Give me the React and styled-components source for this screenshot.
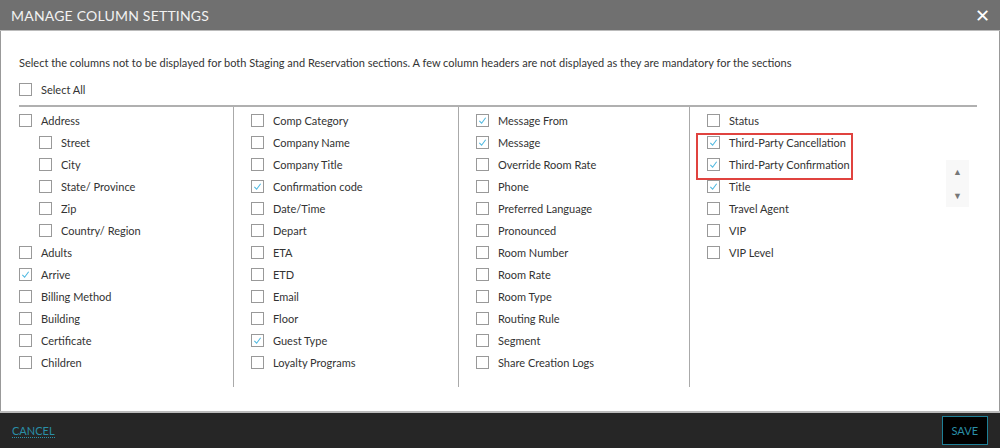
import React from "react";
import styled, { createGlobalStyle } from "styled-components";

const G = createGlobalStyle`
  body { margin:0; font-family: Lato, "Liberation Sans", sans-serif; }
`;
const Modal = styled.div`width:1000px;height:448px;display:flex;flex-direction:column;background:#fff;overflow:hidden;`;
const Header = styled.div`height:30px;background:#707070;display:flex;align-items:center;justify-content:space-between;padding:0 10px 0 11px;color:#f2f2f2;font-size:14px;letter-spacing:0.2px;border-bottom:1px solid #bbb;`;
const Close = styled.span`font-size:18px;color:#fff;line-height:1;`;
const Body = styled.div`flex:1;padding:21px 22px 0 18px;border-left:1px solid #999;border-right:1px solid #999;position:relative;`;
const Intro = styled.div`font-size:11px;color:#333;margin-top:4px;`;
const SelectAll = styled.div`margin-top:9px;padding-bottom:5px;border-bottom:2px solid #b0b0b0;`;
const Grid = styled.div`display:grid;grid-template-columns:215px 225px 231px 1fr;`;
const Col = styled.div`padding:2px 0 10px ${p=>p.$first?0:17}px;${p=>p.$last?"":"border-right:1px solid #aaa;"}height:268px;`;
const Row = styled.div`display:flex;align-items:center;height:22px;padding-left:${p=>p.$indent?20:0}px;font-size:11px;color:#333;gap:9px;`;
const Box = styled.span`width:11px;height:11px;border:1px solid #999;background:#fff;display:inline-flex;align-items:center;justify-content:center;flex-shrink:0;`;
const Highlight = styled.div`position:absolute;left:695px;top:102px;width:157px;height:47px;border:2px solid #e0433f;box-sizing:border-box;`;
const Scroll = styled.div`position:absolute;left:945px;top:129px;width:23px;height:47px;background:#f8f8f8;display:flex;flex-direction:column;align-items:center;justify-content:space-around;color:#777;font-size:9px;`;
const Footer = styled.div`height:35px;background:#262626;display:flex;align-items:center;justify-content:space-between;padding:0 12px 0 12px;border-top:2px solid #bbb;`;
const Cancel = styled.span`color:#2a8fa8;font-size:11px;border-bottom:1px dotted #2a8fa8;`;
const Save = styled.span`color:#2a8fa8;font-size:11px;background:#000;border:1px solid #1e7f96;padding:7px 9px;`;

const Check = ({c}) => <Box>{c ? <svg width="9" height="9" viewBox="0 0 10 10"><path d="M1.5 5.5 L4 8 L8.5 2" fill="none" stroke="#4fb8e0" strokeWidth="1.2"/></svg> : null}</Box>;

const cols = [
  [["Address"],["Street",0,1],["City",0,1],["State/ Province",0,1],["Zip",0,1],["Country/ Region",0,1],["Adults"],["Arrive",1],["Billing Method"],["Building"],["Certificate"],["Children"]],
  [["Comp Category"],["Company Name"],["Company Title"],["Confirmation code",1],["Date/Time"],["Depart"],["ETA"],["ETD"],["Email"],["Floor"],["Guest Type",1],["Loyalty Programs"]],
  [["Message From",1],["Message",1],["Override Room Rate"],["Phone"],["Preferred Language"],["Pronounced"],["Room Number"],["Room Rate"],["Room Type"],["Routing Rule"],["Segment"],["Share Creation Logs"]],
  [["Status"],["Third-Party Cancellation",1],["Third-Party Confirmation",1],["Title",1],["Travel Agent"],["VIP"],["VIP Level"]],
];

export default function App(){
  return <><G/><Modal>
    <Header><span>MANAGE COLUMN SETTINGS</span><Close>✕</Close></Header>
    <Body>
      <Intro>Select the columns not to be displayed for both Staging and Reservation sections. A few column headers are not displayed as they are mandatory for the sections</Intro>
      <SelectAll><Row><Check/>Select All</Row></SelectAll>
      <Grid>{cols.map((c,i)=><Col key={i} $first={i===0} $last={i===3}>{c.map(([t,k,ind])=><Row key={t} $indent={!!ind}><Check c={!!k}/>{t}</Row>)}</Col>)}</Grid>
      <Highlight/>
      <Scroll><span>▲</span><span>▼</span></Scroll>
    </Body>
    <Footer><Cancel>CANCEL</Cancel><Save>SAVE</Save></Footer>
  </Modal></>;
}
